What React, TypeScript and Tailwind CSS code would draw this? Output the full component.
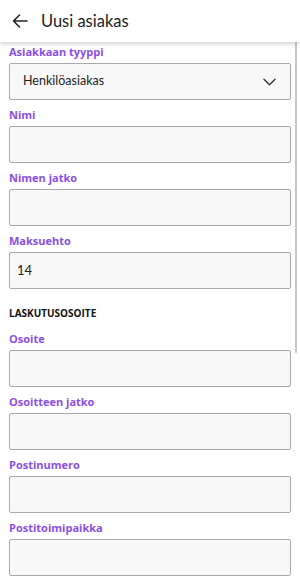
import React from "react";

interface FieldProps {
  label: string;
  value?: string;
}

const labelCls =
  "pb-[4px] text-[11px] leading-[14px] font-bold text-[#8a4ee8] font-['Open_Sans',sans-serif]";

function Field({ label, value }: FieldProps) {
  return (
    <div>
      <div className={`pt-[8px] ${labelCls}`}>{label}</div>
      <div className="h-[37px] rounded-[2px] border border-[#a9a9ad] bg-[#f8f8f8] flex items-center pl-[7px] text-[13px] text-[#222]">
        {value}
      </div>
    </div>
  );
}

export default function App() {
  return (
    <div
      className="relative w-[300px] h-[584px] overflow-hidden bg-white"
      style={{ fontFamily: "Lato, 'Noto Sans', sans-serif" }}
    >
      <header className="relative z-10 h-[42px] flex items-center bg-white shadow-[0_2px_4px_rgba(0,0,0,0.18)]">
        <svg
          className="ml-[12px]"
          width="16"
          height="16"
          viewBox="0 0 16 16"
          fill="none"
          stroke="#222"
          strokeWidth="1.6"
          strokeLinecap="round"
          strokeLinejoin="round"
        >
          <path d="M15 8H1.5M7.5 2L1.5 8l6 6" />
        </svg>
        <h1 className="ml-[13px] text-[16.5px] text-[#222]">Uusi asiakas</h1>
      </header>

      <div className="px-[9px]">
        <div>
          <div className={`pt-[3px] ${labelCls}`}>Asiakkaan tyyppi</div>
          <div className="h-[37px] rounded-[2px] border border-[#a9a9ad] bg-[#f8f8f8] flex items-center justify-between pl-[13px] pr-[14px] text-[12.5px] text-[#222]">
            <span>Henkilöasiakas</span>
            <svg width="13" height="8" viewBox="0 0 13 8" fill="none" stroke="#333" strokeWidth="1.4" strokeLinecap="round" strokeLinejoin="round">
              <path d="M1 1.2l5.5 5.5L12 1.2" />
            </svg>
          </div>
        </div>
        <Field label="Nimi" />
        <Field label="Nimen jatko" />
        <Field label="Maksuehto" value="14" />

        <div className="pt-[17px] pb-[4px] text-[10px] leading-[14px] font-bold text-[#111] font-['Open_Sans',sans-serif]">
          LASKUTUSOSOITE
        </div>

        <Field label="Osoite" />
        <Field label="Osoitteen jatko" />
        <Field label="Postinumero" />
        <Field label="Postitoimipaikka" />
      </div>

      <div className="absolute right-[3px] top-[42px] w-[2px] h-[311px] rounded-full bg-[#c6c6c6]" />
    </div>
  );
}
